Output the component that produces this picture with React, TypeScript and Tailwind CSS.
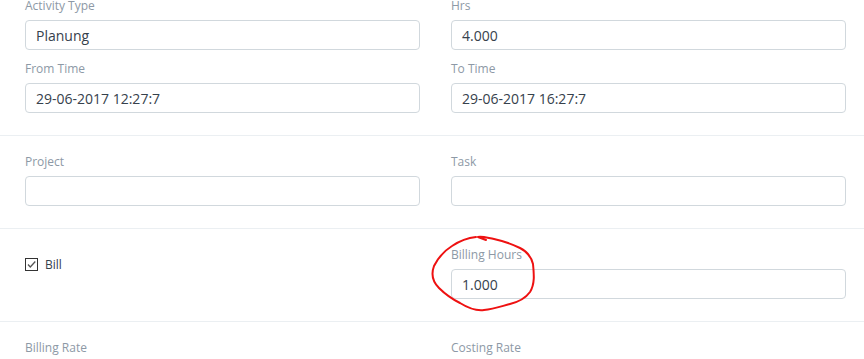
import React from "react";

const font = { fontFamily: '"Open Sans", "Liberation Sans", sans-serif' };

interface FieldProps {
  label: string;
  value?: string;
}

const Field: React.FC<FieldProps> = ({ label, value }) => {
  return (
    <div className="mb-[10px]">
      <div className="text-[12px] leading-[18px] mb-[5px] text-[#8d99a6] whitespace-nowrap">{label}</div>
      <div className="h-[30px] border border-[#d1d8dd] rounded-[4px] px-[10px] flex items-center text-[14px] text-[#36414c]">
        {value}
      </div>
    </div>
  );
};

const Section: React.FC<{ children: React.ReactNode }> = ({ children }) => {
  return (
    <div className="border-t border-[#ebeff2] pt-[17px] pb-[12px] pl-[25px] pr-[18px]">
      <div className="grid grid-cols-2 gap-x-[31px]">{children}</div>
    </div>
  );
};

// the red marker ring drawn round "Billing Hours"
const Scribble = () => (
  <svg className="absolute left-0 top-0 pointer-events-none" width="864" height="359">
    <path
      d="M476 237 C466 238 458 242 452 246 C444 251 438 258 434 266 C431 274 433 282 439 288 C446 295 452 299 460 303 C468 308 476 311 484 310 C494 309 502 306 510 304 C518 302 525 299 530 292 C535 284 534 274 533 264 C531 256 526 251 520 248 C512 244 503 241 494 239 C488 238 482 236 478 237 L486 240"
      fill="none"
      stroke="#ee1111"
      strokeWidth="2"
      strokeLinecap="round"
      strokeLinejoin="round"
    />
  </svg>
);

export default function App() {
  return (
    <div className="relative w-[864px] h-[359px] overflow-hidden bg-white" style={font}>
      <div className="-mt-[21px]">
        <Section>
          <div>
            <Field label="Activity Type" value="Planung" />
            <Field label="From Time" value="29-06-2017 12:27:7" />
          </div>
          <div>
            <Field label="Hrs" value="4.000" />
            <Field label="To Time" value="29-06-2017 16:27:7" />
          </div>
        </Section>
        <Section>
          <Field label="Project" />
          <Field label="Task" />
        </Section>
        <Section>
          <div className="mt-[12px] flex items-center gap-[7px] h-[13px]">
            <span className="w-[13px] h-[13px] border border-[#333] flex items-center justify-center bg-white">
              <svg width="11" height="11" viewBox="0 0 11 11">
                <path d="M2 5.5 L4.3 8 L9.3 2.5" fill="none" stroke="#555" strokeWidth="1.3" />
              </svg>
            </span>
            <span className="text-[12px] leading-[13px] text-[#36414c]">Bill</span>
          </div>
          <Field label="Billing Hours" value="1.000" />
        </Section>
        <Section>
          <Field label="Billing Rate" />
          <Field label="Costing Rate" />
        </Section>
      </div>
      <Scribble />
    </div>
  );
}
